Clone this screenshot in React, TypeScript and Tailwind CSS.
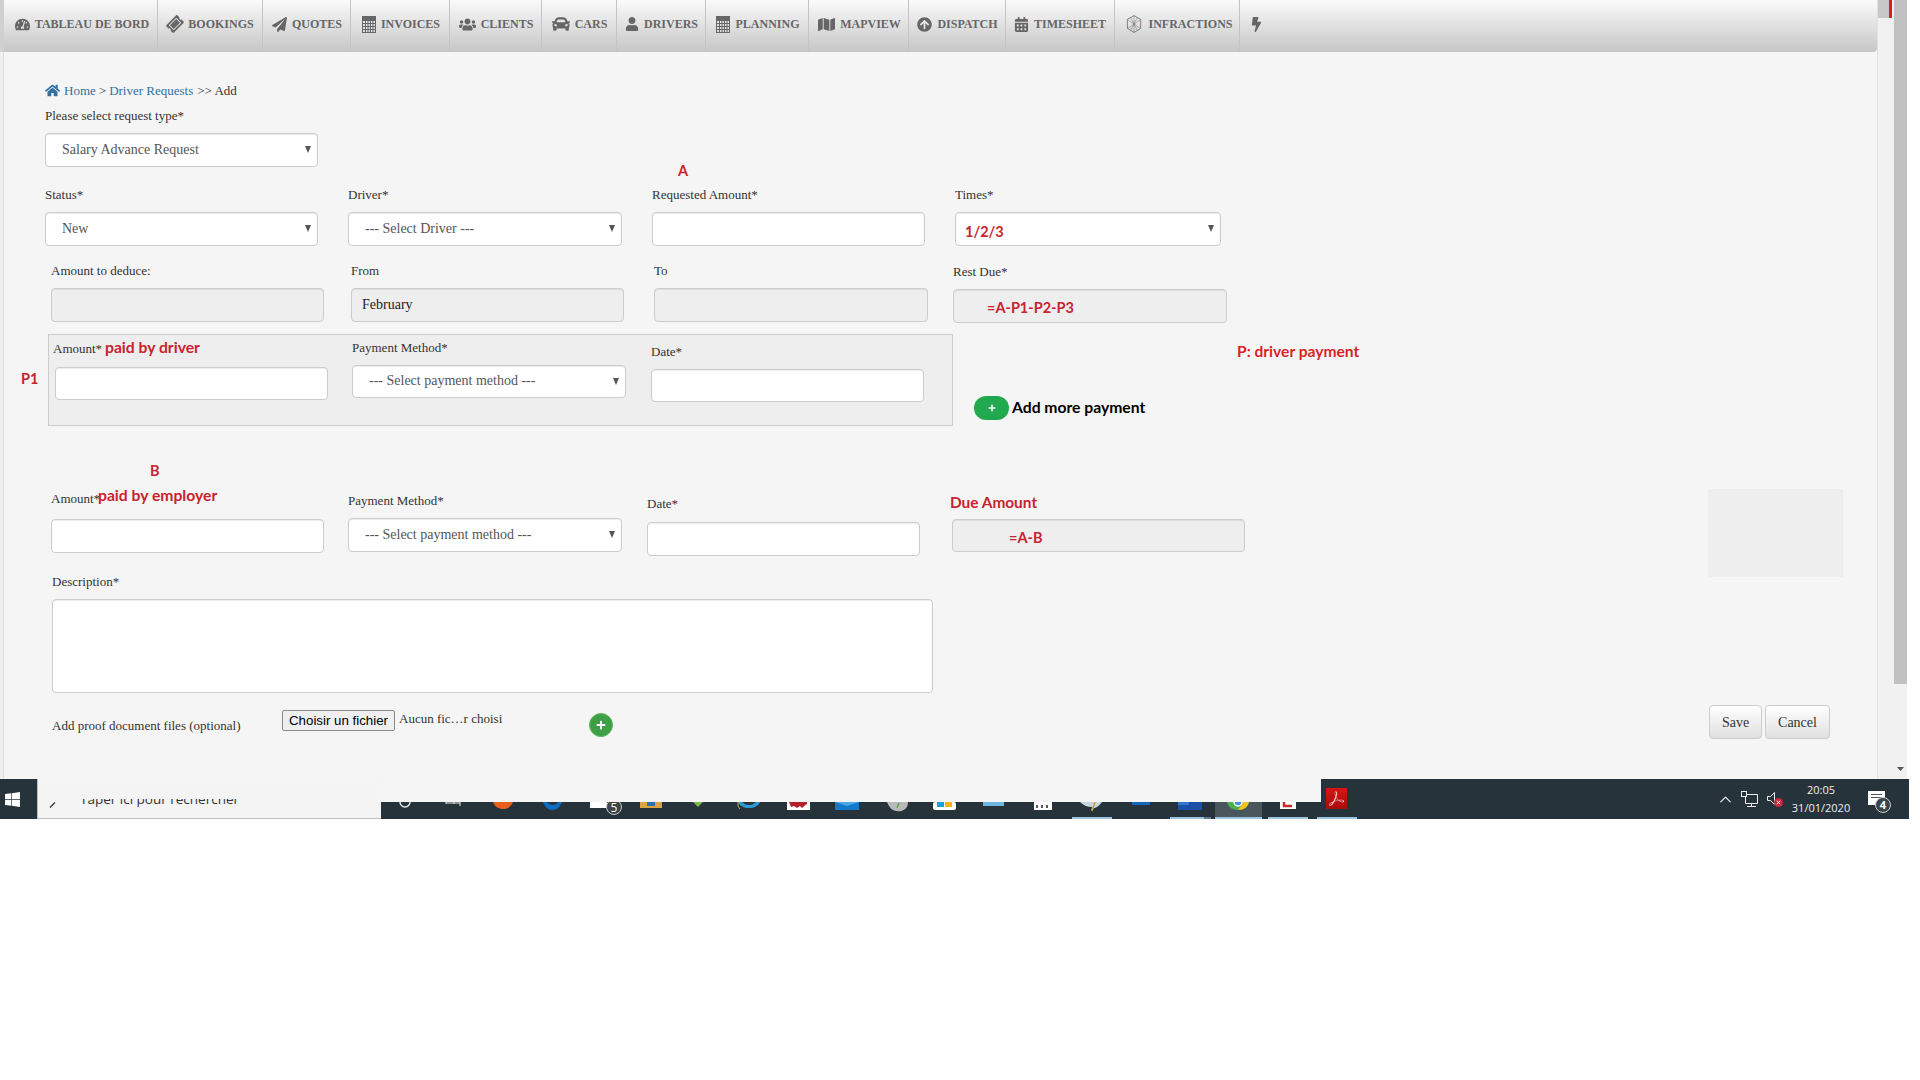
import React from 'react';
import {
  FaTachometerAlt, FaTicketAlt, FaPaperPlane, FaUsers, FaCar, FaUser, FaMap,
  FaArrowCircleUp, FaCalendarAlt, FaBolt, FaHome, FaWindows, FaPlus,
} from 'react-icons/fa';
import { SiAdobeacrobatreader } from 'react-icons/si';
import { ChevronUp } from 'lucide-react';

const CalcIcon = () => (
  <svg width="14" height="17" viewBox="0 0 14 17" fill="none" stroke="currentColor">
    <rect x="0.5" y="0.5" width="13" height="16" strokeWidth="1" />
    <rect x="1" y="1" width="12" height="4" fill="currentColor" stroke="none" />
    <path d="M1 7.500h12M1 10.500h12M1 13.500h12M3.500 5v11M6 5v11M8.500 5v11M11 5v11" strokeWidth="1" />
  </svg>
);

const HexIcon = () => (
  <svg width="18" height="18" viewBox="0 0 16 16" fill="none" stroke="currentColor" strokeWidth="0.7">
    <path d="M8 .5l6 3.500-.2 8L8 15.500 2.200 12 2 4z" />
    <path d="M2 4l11.800 8M14 4L2.200 12M8 .5v15M5 2.200l6 11.600M11 2.200L5 13.800" opacity="0.6" />
  </svg>
);

const navItems = [
  { label: 'Tableau de bord', icon: <FaTachometerAlt size={15} />, cls: 'w-[154px] pl-[3px]' },
  { label: 'Bookings', icon: <FaTicketAlt size={16} className="-rotate-45" />, cls: 'w-[105px] pl-[1px]' },
  { label: 'Quotes', icon: <FaPaperPlane size={15} />, cls: 'w-[88px] pl-[1px]' },
  { label: 'Invoices', icon: <CalcIcon />, cls: 'w-[99px] pl-[2px]' },
  { label: 'Clients', icon: <FaUsers size={17} />, cls: 'w-[92px] pl-[1px]' },
  { label: 'Cars', icon: <FaCar size={18} />, cls: 'w-[75px] pl-[1px]' },
  { label: 'Drivers', icon: <FaUser size={14} />, cls: 'w-[89px] pl-[1px]' },
  { label: 'Planning', icon: <CalcIcon />, cls: 'w-[103px] pl-[2px]' },
  { label: 'Mapview', icon: <FaMap size={17} />, cls: 'w-[100px] pl-[2px]' },
  { label: 'Dispatch', icon: <FaArrowCircleUp size={15} />, cls: 'w-[97px] pl-[1px]' },
  { label: 'Timesheet', icon: <FaCalendarAlt size={15} />, cls: 'w-[109px]' },
  { label: 'Infractions', icon: <HexIcon />, cls: 'w-[125px] pl-[4px]' },
];

const Label = ({ children, className = '' }: { children: React.ReactNode; className?: string }) => (
  <div className={`h-5 text-[13px] leading-5 text-[#333] whitespace-nowrap ${className}`}>{children}</div>
);

const TextField = ({ className = '', value, disabled }: { className?: string; value?: string; disabled?: boolean }) => (
  <input
    readOnly
    disabled={disabled}
    value={value ?? ''}
    className={`block w-full border border-[#ccc] rounded-[4px] px-[10px] text-[14px] text-[#222] shadow-[inset_0_1px_1px_rgba(0,0,0,0.075)] ${disabled ? 'bg-[#eee]' : 'bg-white'} ${className}`}
  />
);

const Select = ({ value, className = '' }: { value: string; className?: string }) => (
  <div className={`relative ${className}`}>
    <select
      defaultValue={value}
      className="block w-full h-full appearance-none bg-white border border-[#ccc] rounded-[4px] pl-[16px] pb-[2px] text-[14px] text-[#555] shadow-[inset_0_1px_1px_rgba(0,0,0,0.075)]"
    >
      <option>{value}</option>
    </select>
    <svg className="absolute right-[7px] top-[13px] text-[#555]" width="6" height="7" viewBox="0 0 6 7">
      <path d="M0 0h6L3 7z" fill="currentColor" />
    </svg>
  </div>
);

const Note = ({ children, className = '' }: { children: React.ReactNode; className?: string }) => (
  <span className={`absolute font-['Lato',sans-serif] font-bold text-[14.500px] leading-5 text-[#c8232f] whitespace-nowrap ${className}`}>
    {children}
  </span>
);

// bits of the taskbar icons that stick out under the page, coordinates local to the strip
const TaskbarStrip = () => (
  <svg width="940" height="17" viewBox="0 0 940 17" className="block">
    <path d="M19 0a5 5 0 0 0 10 0" fill="none" stroke="#e8e8e8" strokeWidth="1.500" />
    <path d="M65 1h14M65 0v2M73 0v2M79 0v4" fill="none" stroke="#e8e8e8" strokeWidth="1" />
    <path d="M112 0h20c-2 5-6 7-10 7s-8-2-10-7z" fill="#e8601c" />
    <path d="M162 0h19c-2 5-5 8-10 8-4 0-7-3-9-8z" fill="#0a6fc2" />
    <path d="M166 0h11c-1 2-3 3-5 3s-5-1-6-3z" fill="#26333b" />
    <rect x="209" y="0" width="17" height="6" fill="#fff" />
    <circle cx="233" cy="5" r="7.500" fill="#3b4449" stroke="#c8c8c8" />
    <text x="233" y="9.500" textAnchor="middle" fontSize="12" fill="#fff" fontFamily="Open Sans, sans-serif">5</text>
    <path d="M259 0h22v6h-22z" fill="#d9a441" />
    <rect x="266" y="0" width="8" height="4" fill="#2f6db5" />
    <path d="M312 0h10l-5 5z" fill="#7ab648" />
    <path d="M357 0h22c-2 4-6 6-11 6-5 0-9-2-11-6z" fill="#2e9bd6" />
    <path d="M361 0h14c-2 2-4 3-7 3s-5-1-7-3z" fill="#26333b" />
    <path d="M357 0v4l2 3" fill="none" stroke="#d3a73d" />
    <rect x="406" y="0" width="23" height="8" fill="#fff" />
    <path d="M408 0h18v2c-2 1-3 2-5 4l-2-2-3 2-3-2-3 1z" fill="#b3202c" />
    <path d="M454 0h24v8h-24z" fill="#1479c9" />
    <path d="M454 0l12 4 12-4z" fill="#4aa8e8" />
    <path d="M506 0h21c0 4-2 8-7 9-6 1-11-1-14-9z" fill="#b9b9b9" />
    <path d="M518 1l-2 5" stroke="#5ea84a" strokeWidth="1.500" />
    <rect x="552" y="0" width="23" height="8" rx="2" fill="#fff" />
    <rect x="556" y="0" width="7" height="5" fill="#1ca0dc" />
    <rect x="564" y="0" width="7" height="5" fill="#f2b41b" />
    <rect x="602" y="0" width="21" height="4" fill="#6fb7e3" />
    <rect x="653" y="0" width="18" height="8" fill="#fff" />
    <path d="M656 3v3M661 3v3M666 3v3" stroke="#222" strokeWidth="1.500" />
    <path d="M699 0h22c-3 4-6 6-8 6l-3 3 1-4c-5 0-9-2-12-5z" fill="#c9d4dc" />
    <path d="M714 0l-3 9" stroke="#c89a4b" strokeWidth="1.500" />
    <rect x="751" y="0" width="18" height="3" fill="#1565c0" />
    <rect x="797" y="0" width="24" height="8" fill="#1c4fa8" />
    <rect x="797" y="0" width="11" height="3" fill="#2f77d0" />
    <rect x="834" y="0" width="47" height="17" fill="#4b565c" />
    <path d="M846 0h22c-1 5-5 8-11 8s-10-3-11-8z" fill="#4caf50" />
    <path d="M857 8c6 0 10-3 11-8h-6c0 2-2 4-5 8z" fill="#f5c518" />
    <circle cx="857" cy="0" r="4" fill="#4a90d9" stroke="#fff" strokeWidth="1.500" />
    <rect x="899" y="0" width="16" height="7" fill="#fff" />
    <path d="M903 0v4h8" fill="none" stroke="#c42b2b" strokeWidth="2.500" />
    <rect x="691" y="15" width="40" height="2" fill="#9cc4dc" />
    <rect x="789" y="15" width="34" height="2" fill="#9cc4dc" />
    <rect x="823" y="15" width="7" height="2" fill="#5e7b8c" />
    <rect x="834" y="15" width="47" height="2" fill="#9cc4dc" />
    <rect x="887" y="15" width="40" height="2" fill="#9cc4dc" />
    <rect x="936" y="15" width="4" height="2" fill="#9cc4dc" />
  </svg>
);

export default function App() {
  return (
    <div className="w-[1920px] h-[1080px] overflow-hidden bg-white font-['Liberation_Serif',serif]">
      <div className="flex w-[1909px] h-[779px]">
        {/* left sliver of the window */}
        <div className="w-[4px] flex flex-col">
          <div className="h-[52px] bg-[#d0d0d0]" />
          <div className="flex-1 bg-[#f0f0f0] border-r border-[#dedede]" />
        </div>

        {/* page */}
        <div className="w-[1873px] bg-[#f5f5f5]">
          <nav className="flex h-[52px] rounded-br-[4px] bg-gradient-to-b from-[#fbfbfb] to-[#c6c6c6]">
            {navItems.map((item) => (
              <div
                key={item.label}
                className={`flex items-center justify-center gap-[5px] pb-[4px] border-r border-[#c4c4c4] text-[#666] ${item.cls}`}
              >
                {item.icon}
                <span className="text-[12px] font-bold uppercase whitespace-nowrap">{item.label}</span>
              </div>
            ))}
            <div className="flex items-center pl-[9px] pb-[4px] text-[#666]">
              <FaBolt size={15} />
            </div>
          </nav>

          <div className="relative pl-[41px] pt-[29px]">
            <Note className="left-[674px] top-[109px]">A</Note>
            <Note className="left-[17px] top-[317px]">P1</Note>

            <div className="flex items-center h-5 text-[13px] text-[#333]">
              <FaHome size={15} className="text-[#34709f] mr-[4px] -mt-[2px]" />
              <span className="text-[#34709f]">Home</span>
              <span className="mx-[3px]">&gt;</span>
              <span className="text-[#34709f]">Driver Requests</span>
              <span className="ml-[4px]">&gt;&gt; Add</span>
            </div>

            <Label className="mt-[5px]">Please select request type*</Label>
            <Select value="Salary Advance Request" className="mt-[7px] w-[273px] h-[34px]" />

            {/* status row */}
            <div className="flex mt-[18px]">
              <div className="w-[273px]">
                <Label>Status*</Label>
                <Select value="New" className="mt-[7px] h-[34px]" />
              </div>
              <div className="w-[274px] ml-[30px]">
                <Label>Driver*</Label>
                <Select value="--- Select Driver ---" className="mt-[7px] h-[34px]" />
              </div>
              <div className="w-[273px] ml-[30px]">
                <Label>Requested Amount*</Label>
                <TextField className="mt-[7px] h-[34px]" />
              </div>
              <div className="relative w-[266px] ml-[30px]">
                <Label>Times*</Label>
                <Select value="" className="mt-[7px] h-[34px]" />
                <Note className="left-[10px] top-[37px]">1/2/3</Note>
              </div>
            </div>

            {/* deduction row */}
            <div className="flex mt-[15px] ml-[6px]">
              <div className="w-[273px]">
                <Label>Amount to deduce:</Label>
                <TextField disabled className="mt-[7px] h-[34px]" />
              </div>
              <div className="w-[273px] ml-[27px]">
                <Label>From</Label>
                <TextField disabled value="February" className="mt-[7px] h-[34px]" />
              </div>
              <div className="w-[274px] ml-[30px]">
                <Label>To</Label>
                <TextField disabled className="mt-[7px] h-[34px]" />
              </div>
              <div className="relative w-[274px] ml-[25px] pt-[1px]">
                <Label>Rest Due*</Label>
                <TextField disabled className="mt-[7px] h-[34px]" />
                <Note className="left-[34px] top-[37px]">=A-P1-P2-P3</Note>
              </div>
            </div>

            {/* driver payment */}
            <div className="relative flex items-start mt-[11px] ml-[3px]">
              <div className="flex w-[905px] h-[92px] pl-[6px] bg-[#eee] border border-[#ccc]">
                <div className="relative w-[273px] pt-[4px]">
                  <Label className="-ml-[2px]">Amount*</Label>
                  <Note className="left-[50px] top-[2px] text-[15.700px]">paid by driver</Note>
                  <TextField className="mt-[8px] h-[33px]" />
                </div>
                <div className="w-[274px] ml-[24px] pt-[3px]">
                  <Label>Payment Method*</Label>
                  <Select value="--- Select payment method ---" className="mt-[7px] h-[33px]" />
                </div>
                <div className="w-[273px] ml-[25px] pt-[7px]">
                  <Label>Date*</Label>
                  <TextField className="mt-[7px] h-[33px]" />
                </div>
              </div>
              <div className="flex items-center gap-[3px] ml-[21px] mt-[62px]">
                <div className="flex items-center justify-center w-[35px] h-[24px] rounded-full bg-[#22a94f] text-white">
                  <FaPlus size={8} />
                </div>
                <span className="font-['Lato',sans-serif] font-bold text-[15.700px] text-black whitespace-nowrap">Add more payment</span>
              </div>
              <Note className="left-[1189px] top-[7px] text-[15.600px] text-[#dc1f26]">P: driver payment</Note>
            </div>

            {/* lower part, form on the left, preview box and actions on the right */}
            <div className="flex mt-[63px]">
              <div className="relative w-[1200px] ml-[6px]">
                <Note className="left-[99px] -top-[28px]">B</Note>
                <Note className="left-[47px] -top-[4px] text-[15.700px]">paid by employer</Note>
                <Note className="left-[899px] top-[3px] text-[15.400px]">Due Amount</Note>

                <div className="flex">
                  <div className="w-[273px]">
                    <Label>Amount*</Label>
                    <TextField className="mt-[10px] h-[34px]" />
                  </div>
                  <div className="w-[274px] ml-[24px] pt-[2px]">
                    <Label>Payment Method*</Label>
                    <Select value="--- Select payment method ---" className="mt-[7px] h-[34px]" />
                  </div>
                  <div className="w-[273px] ml-[25px] pt-[5px]">
                    <Label>Date*</Label>
                    <TextField className="mt-[8px] h-[34px]" />
                  </div>
                  <div className="relative w-[293px] ml-[32px] pt-[30px]">
                    <TextField disabled className="h-[33px]" />
                    <Note className="left-[57px] top-[39px]">=A-B</Note>
                  </div>
                </div>

                <Label className="mt-[16px] ml-[1px]">Description*</Label>
                <textarea
                  readOnly
                  className="block mt-[7px] ml-[1px] w-[881px] h-[94px] resize-none bg-white border border-[#ccc] rounded-[4px] shadow-[inset_0_1px_1px_rgba(0,0,0,0.075)]"
                />

                <div className="flex items-start mt-[17px] ml-[1px]">
                  <Label className="w-[230px] mt-[6px]">Add proof document files (optional)</Label>
                  <button className="w-[113px] h-[21px] bg-[#efefef] border border-[#8a8a8a] rounded-[2px] font-['Liberation_Sans',sans-serif] text-[13.300px] leading-none text-black">
                    Choisir un fichier
                  </button>
                  <span className="w-[103px] ml-[4px] text-[13px] leading-[18px] text-[#333] whitespace-nowrap">Aucun fic…r choisi</span>
                  <div className="flex items-center justify-center w-[24px] h-[24px] ml-[87px] mt-[3px] rounded-full bg-[#3f9f46] border border-[#5cb85c] text-white">
                    <FaPlus size={10} />
                  </div>
                </div>
              </div>

              <div className="ml-[457px]">
                <div className="w-[135px] h-[88px] bg-[#eeeeee]" />
                <div className="flex gap-[3px] mt-[128px] ml-[1px]">
                  <button className="w-[53px] h-[34px] text-[14px] text-[#333] rounded-[4px] border border-[#ccc] bg-gradient-to-b from-white to-[#e0e0e0]">
                    Save
                  </button>
                  <button className="w-[65px] h-[34px] text-[14px] text-[#333] rounded-[4px] border border-[#ccc] bg-gradient-to-b from-white to-[#e0e0e0]">
                    Cancel
                  </button>
                </div>
              </div>
            </div>
          </div>
        </div>

        {/* browser scrollbar */}
        <div className="flex w-[32px]">
          <div className="w-[17px] flex flex-col bg-[#f1f1f1] border-l border-[#e2e2e2]">
            <div className="flex h-[18px]">
              <div className="w-[11px] bg-[#c8c8c8]" />
              <div className="w-[3px] bg-[#e01b1b]" />
            </div>
          </div>
          <div className="w-[15px] flex flex-col">
            <div className="w-[13px] h-[684px] bg-[#c1c1c1]" />
            <div className="relative w-[13px] flex-1 bg-[#f1f1f1]">
              <svg className="absolute left-[3px] bottom-[8px]" width="7" height="4" viewBox="0 0 7 4">
                <path d="M0 0h7L3.500 4z" fill="#555" />
              </svg>
            </div>
          </div>
        </div>
      </div>

      {/* windows taskbar */}
      <div className="flex w-[1909px] h-[40px]">
        <div className="w-[37px] flex items-center pl-[4px] bg-[#26333b] text-white">
          <FaWindows size={17} />
        </div>
        <div className="w-[344px] bg-[#f4f4f4] border-l border-b border-[#bdbdbd]">
          <div className="h-[20px]" />
          <div className="h-[19px] overflow-hidden flex items-start">
            <svg className="ml-[11px] mt-[3px]" width="7" height="6" viewBox="0 0 7 6">
              <path d="M1 5.500L6 .5" stroke="#333" strokeWidth="1.200" />
            </svg>
            <span className="ml-[24px] -mt-[8px] font-['Open_Sans',sans-serif] text-[13.500px] leading-[16px] text-[#333] whitespace-nowrap">
              Taper ici pour rechercher
            </span>
          </div>
        </div>
        <div className="w-[940px]">
          <div className="h-[23px] bg-[#f5f5f5]" />
          <div className="h-[17px] bg-[#26333b]">
            <TaskbarStrip />
          </div>
        </div>
        <div className="relative flex flex-1 items-center bg-[#26333b] text-white">
          <div className="flex items-center justify-center w-[21px] h-[21px] ml-[5px] -mt-[1px] bg-gradient-to-b from-[#d81414] to-[#a80c0c] text-[#f5d0d0]">
            <SiAdobeacrobatreader size={15} />
          </div>
          <div className="absolute left-0 bottom-0 w-[36px] h-[2px] bg-[#9cc4dc]" />

          <ChevronUp size={19} strokeWidth={1.500} className="ml-[369px] text-[#eee]" />
          <svg className="ml-[6px]" width="17" height="16" viewBox="0 0 17 16" fill="none" stroke="#eee">
            <path d="M4.500 3.500h12v9h-12zM10.500 12.500v3M6 15.500h9" />
            <rect x="0.500" y="0.500" width="5" height="5" fill="#26333b" />
          </svg>
          <svg className="ml-[9px]" width="17" height="17" viewBox="0 0 17 17" fill="none">
            <path d="M.5 5.500h3l4-4v12l-4-4h-3z" stroke="#eee" />
            <circle cx="11.500" cy="11.500" r="4.500" fill="#c8283a" />
            <path d="M9.800 9.800l3.400 3.400M13.200 9.800l-3.400 3.400" stroke="#fff" />
          </svg>
          <div className="ml-[3px] w-[68px] text-center font-['Open_Sans',sans-serif] text-[11px] leading-[18px] text-[#eee]">
            <div>20:05</div>
            <div>31/01/2020</div>
          </div>
          <div className="relative ml-[13px] w-[17px] h-[14px] -mt-[2px] bg-white">
            <div className="mx-[3px] mt-[3px] h-[1px] bg-[#555]" />
            <div className="mx-[3px] mt-[2px] h-[1px] bg-[#555]" />
            <span className="absolute left-[7px] top-[6px] flex items-center justify-center w-[16px] h-[16px] rounded-full bg-[#3b4449] border border-[#c8c8c8] font-['Open_Sans',sans-serif] text-[11px] font-bold text-white">
              4
            </span>
          </div>
        </div>
      </div>
    </div>
  );
}
